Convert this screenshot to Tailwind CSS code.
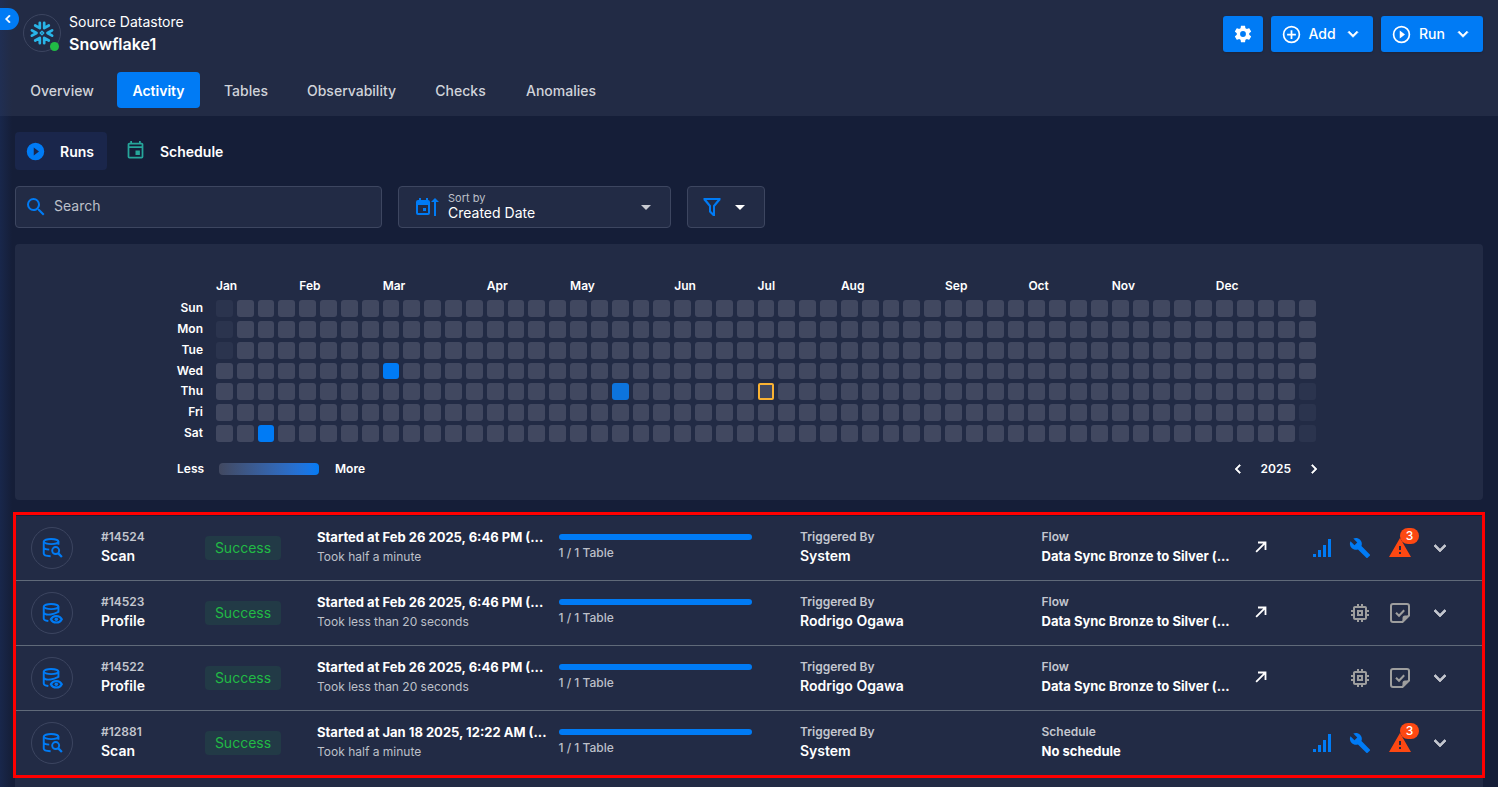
<!DOCTYPE html>
<html lang="en">
<head>
<meta charset="utf-8">
<title>Snowflake1 - Activity</title>
<meta name="viewport" content="width=device-width, initial-scale=1">
<script src="https://cdn.jsdelivr.net/npm/@tailwindcss/browser@4"></script>
</head>
<body class="relative flex min-h-screen flex-col bg-[#151e38] font-['Inter','Liberation_Sans',sans-serif] text-sm text-white">

<svg class="hidden" aria-hidden="true">
  <symbol id="chev-down" viewBox="0 0 24 24"><path stroke="currentColor" stroke-width="0.8" d="M7.41,8.58L12,13.17L16.59,8.58L18,10L12,16L6,10L7.41,8.58Z"/></symbol>
  <symbol id="chev-left" viewBox="0 0 24 24"><path stroke="currentColor" stroke-width="0.8" d="M15.41,16.58L10.83,12L15.41,7.41L14,6L8,12L14,18L15.41,16.58Z"/></symbol>
  <symbol id="chev-right" viewBox="0 0 24 24"><path stroke="currentColor" stroke-width="0.8" d="M8.59,16.58L13.17,12L8.59,7.41L10,6L16,12L10,18L8.59,16.58Z"/></symbol>
  <symbol id="menu-down" viewBox="0 0 24 24"><path d="M7,10L12,15L17,10H7Z"/></symbol>
  <symbol id="wrench" viewBox="0 0 24 24"><path d="M22.7,19L13.6,9.9C14.5,7.6 14,4.9 12.1,3C10.1,1 7.1,0.6 4.7,1.7L9,6L6,9L1.6,4.7C0.4,7.1 0.9,10.1 2.9,12.1C4.8,14 7.5,14.5 9.8,13.6L18.9,22.7C19.3,23.1 19.9,23.1 20.3,22.7L22.6,20.4C23.1,20 23.1,19.3 22.7,19Z"/></symbol>
  <symbol id="alert" viewBox="0 0 24 24"><path d="M13,14H11V10H13M13,18H11V16H13M1,21H23L12,2L1,21Z"/></symbol>
  <symbol id="bars" viewBox="0 0 24 24"><path d="M3,18H6V21H3ZM8,14H11V21H8ZM13,9H16V21H13ZM18,3H21V21H18Z"/></symbol>
  <symbol id="chip" viewBox="0 0 24 24"><path d="M15 9H9v6h6V9zm-2 4h-2v-2h2v2zm8-2V9h-2V7c0-1.1-.9-2-2-2h-2V3h-2v2h-2V3H9v2H7c-1.1 0-2 .9-2 2v2H3v2h2v2H3v2h2v2c0 1.1.9 2 2 2h2v2h2v-2h2v2h2v-2h2c1.1 0 2-.9 2-2v-2h2v-2h-2v-2h2zm-4 6H7V7h10v10z"/></symbol>
  <symbol id="note-check" viewBox="0 0 24 24"><path d="M14.5,21H5A2,2 0 0,1 3,19V5A2,2 0 0,1 5,3H19A2,2 0 0,1 21,5V14.5Z" fill="none" stroke="currentColor" stroke-width="2"/><path d="M14.5,21V17A2.5,2.5 0 0,1 17,14.5H21Z"/><path d="M8,11.8L11,14.8L16.2,9.2" fill="none" stroke="currentColor" stroke-width="2"/></symbol>
  <symbol id="arrow" viewBox="0 0 24 24"><path d="M5.5,18.5L17.5,6.5M8,6H18V16" fill="none" stroke="currentColor" stroke-width="2.4"/></symbol>
  <symbol id="db-scan" viewBox="0 0 24 24" fill="none" stroke="currentColor" stroke-width="2.1">
    <ellipse cx="11" cy="5" rx="8" ry="2.8"/><path d="M3,5V18C3,19.5 5.5,20.800 10.5,21M19,5V8.500M3,11.500C3.300,12.800 5.500,13.600 9,13.800"/><circle cx="16" cy="14.800" r="3.800"/><path stroke-width="2.500" d="M18.600,17.600L22.800,21.800"/>
  </symbol>
  <symbol id="db-profile" viewBox="0 0 24 24" fill="none" stroke="currentColor" stroke-width="2.1">
    <ellipse cx="11" cy="5" rx="8" ry="2.8"/><path d="M3,5V18C3,19.300 4.500,20.300 8,20.800M19,5V11.500M3,11.500C3.300,13 6.500,14 10.500,13.600C13,13.300 16,12.300 19,10.800"/><path d="M10.700,18.800C12,16.200 14,15.200 16.700,15.200C19.400,15.200 21.400,16.200 22.700,18.800C21.400,21.400 19.400,22.400 16.700,22.400C14,22.400 12,21.400 10.700,18.800Z" stroke-width="2.300"/><circle cx="16.700" cy="18.800" r="1.900" fill="currentColor" stroke="none"/>
  </symbol>
</svg>

<header class="flex flex-col bg-[#222b45] px-[15px] pb-2">
  <div class="flex items-start justify-between pt-[11px]">
    <div class="flex items-center pl-2">
      <div class="relative flex size-[38px] items-center justify-center rounded-full border border-[#3c4560]">
        <svg class="size-6 text-[#29b5e8]" viewBox="0 0 24 24" fill="none" stroke="currentColor" stroke-width="2.700" stroke-linecap="round" stroke-linejoin="round">
          <path d="M9.800,1.800V7.200L5.200,4.500M14.200,1.800V7.200L18.800,4.500M9.800,22.200V16.800L5.200,19.500M14.200,22.200V16.800L18.800,19.500M1.900,9.300L6.500,12L1.900,14.700M22.100,9.300L17.500,12L22.100,14.700"/>
          <path stroke-width="1.300" d="M12,10.200L13.800,12L12,13.800L10.200,12Z"/>
        </svg>
        <span class="absolute right-[1px] bottom-0 size-[9px] rounded-full bg-[#21ba45]"></span>
      </div>
      <div class="pl-2">
        <p class="leading-[22px]">Source Datastore</p>
        <h1 class="text-base leading-[22px] font-semibold">Snowflake1</h1>
      </div>
    </div>
    <div class="flex gap-2 pt-[5px] font-medium">
      <button type="button" aria-label="Settings" class="flex h-9 w-10 items-center justify-center rounded-[3px] bg-[#007bf5] shadow-sm">
        <svg class="size-[20px]" viewBox="0 0 24 24" fill="currentColor"><path d="M12,15.5A3.5,3.5 0 0,1 8.5,12A3.5,3.5 0 0,1 12,8.5A3.5,3.5 0 0,1 15.5,12A3.5,3.5 0 0,1 12,15.5M19.43,12.97C19.47,12.65 19.5,12.33 19.5,12C19.5,11.67 19.47,11.34 19.43,11L21.54,9.37C21.73,9.22 21.78,8.95 21.66,8.73L19.66,5.27C19.54,5.05 19.27,4.96 19.05,5.05L16.56,6.05C16.04,5.66 15.5,5.32 14.87,5.07L14.5,2.42C14.46,2.18 14.25,2 14,2H10C9.75,2 9.54,2.18 9.5,2.42L9.13,5.07C8.5,5.32 7.96,5.66 7.44,6.05L4.95,5.05C4.73,4.96 4.46,5.05 4.34,5.27L2.34,8.73C2.21,8.95 2.27,9.22 2.46,9.37L4.57,11C4.53,11.34 4.5,11.67 4.5,12C4.5,12.33 4.53,12.65 4.57,12.97L2.46,14.63C2.27,14.78 2.21,15.05 2.34,15.27L4.34,18.73C4.46,18.95 4.73,19.03 4.95,18.95L7.44,17.94C7.96,18.34 8.5,18.68 9.13,18.93L9.5,21.58C9.54,21.82 9.75,22 10,22H14C14.25,22 14.46,21.82 14.5,21.58L14.87,18.93C15.5,18.67 16.04,18.34 16.56,17.94L19.05,18.95C19.27,19.03 19.54,18.95 19.66,18.73L21.66,15.27C21.78,15.05 21.73,14.78 21.54,14.63L19.43,12.97Z"/></svg>
      </button>
      <button type="button" class="flex h-9 w-[102px] items-center rounded-[3px] bg-[#007bf5] pl-[10px] shadow-sm">
        <svg class="size-[21px]" viewBox="0 0 24 24" fill="currentColor"><path d="M12,20C7.59,20 4,16.41 4,12C4,7.59 7.59,4 12,4C16.41,4 20,7.59 20,12C20,16.41 16.41,20 12,20M12,2A10,10 0 0,0 2,12A10,10 0 0,0 12,22A10,10 0 0,0 22,12A10,10 0 0,0 12,2M13,7H11V11H7V13H11V17H13V13H17V11H13V7Z"/></svg>
        <span class="flex-1 pr-px text-center">Add</span>
        <svg class="mr-[10px] size-5" fill="currentColor"><use href="#chev-down"/></svg>
      </button>
      <button type="button" class="flex h-9 w-[102px] items-center rounded-[3px] bg-[#007bf5] pl-[10px] shadow-sm">
        <svg class="size-[21px]" viewBox="0 0 24 24" fill="currentColor"><path d="M12,20C7.59,20 4,16.41 4,12C4,7.59 7.59,4 12,4C16.41,4 20,7.59 20,12C20,16.41 16.41,20 12,20M12,2A10,10 0 0,0 2,12A10,10 0 0,0 12,22A10,10 0 0,0 22,12A10,10 0 0,0 12,2M10,16.5L16,12L10,7.5V16.5Z"/></svg>
        <span class="flex-1 pr-px text-center">Run</span>
        <svg class="mr-[10px] size-5" fill="currentColor"><use href="#chev-down"/></svg>
      </button>
    </div>
  </div>
  <nav class="mt-[17px] flex h-9 gap-2 font-medium text-[#d0d3da]">
    <a href="#" class="flex w-[94px] items-center justify-center rounded pt-[2px]">Overview</a>
    <a href="#" class="flex w-[83px] items-center justify-center rounded bg-[#007bf5] pt-[2px] font-semibold text-white" aria-current="page">Activity</a>
    <a href="#" class="flex w-[76px] items-center justify-center rounded pt-[2px]">Tables</a>
    <a href="#" class="flex w-[119px] items-center justify-center rounded pt-[2px]">Observability</a>
    <a href="#" class="flex w-[83px] items-center justify-center rounded pt-[2px]">Checks</a>
    <a href="#" class="flex w-[102px] items-center justify-center rounded pt-[2px]">Anomalies</a>
  </nav>
</header>

<button type="button" aria-label="Collapse" class="absolute top-2 left-0 z-10 flex h-[22px] w-[19px] items-center justify-center rounded-r-full bg-[#007bf5] pr-[3px]">
  <svg class="size-[18px]" fill="currentColor"><use href="#chev-left"/></svg>
</button>
<div class="pointer-events-none absolute inset-y-0 left-0 w-3 bg-gradient-to-r from-[#1d3467]/40 to-transparent"></div>

<main class="flex flex-1 flex-col px-[15px] pt-4">
  <nav class="flex h-[38px] gap-1 font-semibold">
    <a href="#" class="flex w-[92px] items-center rounded bg-[#1a264b] pl-[10px]" aria-current="page">
      <svg class="size-[21px] text-[#007bf5]" viewBox="0 0 24 24" fill="currentColor"><path d="M10,16.5V7.5L16,12M12,2A10,10 0 0,0 2,12A10,10 0 0,0 12,22A10,10 0 0,0 22,12A10,10 0 0,0 12,2Z"/></svg>
      <span class="pt-px pl-[14px]">Runs</span>
    </a>
    <a href="#" class="flex items-center pl-[14px]">
      <svg class="mb-[2px] size-[21px] text-[#26a69a]" viewBox="0 0 24 24" fill="currentColor" fill-rule="evenodd"><path d="M16,1V3H8V1H6V3H5C3.89,3 3,3.890 3,5V19A2,2 0 0,0 5,21H19A2,2 0 0,0 21,19V5C21,3.890 20.100,3 19,3H18V1ZM5,9H19V19H5ZM5,5H19V7H5ZM12,12H17V17H12Z"/></svg>
      <span class="pt-px pl-[14px]">Schedule</span>
    </a>
  </nav>

  <div class="mt-4 flex h-[42px] gap-4">
    <label class="flex w-1/4 items-center rounded border border-[#3d4660] bg-[#222b45] pl-2">
      <svg class="size-6 text-[#007bf5]" viewBox="0 0 24 24" fill="currentColor"><path d="M9.5,3A6.5,6.5 0 0,1 16,9.5C16,11.11 15.41,12.59 14.44,13.73L14.71,14H15.5L20.5,19L19,20.5L14,15.5V14.71L13.73,14.44C12.59,15.41 11.11,16 9.5,16A6.5,6.5 0 0,1 3,9.5A6.5,6.5 0 0,1 9.5,3M9.5,5C7,5 5,7 5,9.5C5,12 7,14 9.5,14C12,14 14,12 14,9.5C14,7 12,5 9.5,5Z"/></svg>
      <input type="search" aria-label="Search" placeholder="Search" class="ml-[6px] min-w-0 flex-1 bg-transparent pb-[2px] outline-none placeholder:text-[#bdc0c9]">
    </label>
    <div class="relative flex w-[273px] items-center rounded border border-[#3d4660] bg-[#222b45] pl-4">
      <svg class="h-6 w-[25px] text-[#007bf5]" viewBox="0 0 25 24" fill="currentColor" fill-rule="evenodd"><path d="M4,3H6V5H11V3H13V5A2,2 0 0,1 15,7V18A2,2 0 0,1 13,20H3A2,2 0 0,1 1,18V7A2,2 0 0,1 3,5H4ZM3,10V18H13V10ZM8,13H11V16H8ZM20,3L24,7H21V21H19V7H16Z"/></svg>
      <div class="flex flex-1 flex-col pb-[2px] pl-2">
        <label for="sort" class="text-[11px] leading-[13px] text-[#bdc0c9]">Sort by</label>
        <select id="sort" class="h-4 w-full appearance-none bg-transparent leading-4 outline-none"><option>Created Date</option></select>
      </div>
      <svg class="pointer-events-none absolute right-3 size-6 text-[#c8cad1]" fill="currentColor"><use href="#menu-down"/></svg>
    </div>
    <button type="button" aria-label="Filter" class="flex w-[78px] items-center rounded border border-[#3d4660] bg-[#222b45] pl-3">
      <svg class="size-6 text-[#007bf5]" viewBox="0 0 24 24" fill="currentColor"><path d="M3.500,3H20.500V5L15,11.500V21H13L9,17V11.500L3.500,5ZM6.500,5L11,10.600V16L13,18V10.600L17.500,5Z" fill-rule="evenodd"/></svg>
      <svg class="ml-1 size-6" fill="currentColor"><use href="#menu-down"/></svg>
    </button>
  </div>

  <section aria-label="Run history" class="mt-4 rounded bg-[#222b45] px-4 pt-8 pb-5">
    <div class="mx-auto max-w-[1144px] pr-[5px] text-xs font-semibold">
      <div id="calendar" class="grid grid-cols-[35px_repeat(53,minmax(0,1fr))] gap-1"></div>
      <div class="mt-4 flex h-[22px] items-center">
        <span class="w-[42px]">Less</span>
        <span class="h-3 w-[100px] rounded bg-gradient-to-r from-[#414860] to-[#007bf5]"></span>
        <span class="ml-4">More</span>
        <div class="-mr-[7px] ml-auto flex items-center gap-[14px]">
          <button type="button" aria-label="Previous year"><svg class="size-[18px]" fill="currentColor"><use href="#chev-left"/></svg></button>
          <span>2025</span>
          <button type="button" aria-label="Next year"><svg class="size-[18px]" fill="currentColor"><use href="#chev-right"/></svg></button>
        </div>
      </div>
    </div>
  </section>

  <section aria-label="Runs" class="mt-4 flex-1 bg-[#222b45]">
    <div class="relative">
      <ul id="runs"></ul>
      <div class="pointer-events-none absolute -inset-x-[2px] -top-1 -bottom-[2px] border-[3px] border-[#ff0000]"></div>
    </div>
  </section>
</main>

<template id="run-row">
  <li class="grid h-[65px] grid-cols-[70px_104px_112px_repeat(4,minmax(0,1fr))_200px] items-center border-b border-[#606a79] pl-4">
    <div class="flex size-[42px] items-center justify-center rounded-full border border-[#3c4560]">
      <svg class="size-[22px] text-[#007bf5]" fill="currentColor"><use data-f="icon"/></svg>
    </div>
    <div class="pb-[2px]">
      <p class="text-xs leading-[18px] font-semibold text-[#c4c7cf]" data-f="id"></p>
      <p class="leading-5 font-semibold" data-f="kind"></p>
    </div>
    <div><span class="flex h-6 w-[76px] items-center justify-center rounded bg-[#223a46] text-[#21ba45]">Success</span></div>
    <div class="whitespace-nowrap">
      <p class="text-[13px] leading-[18px] font-bold" data-f="started"></p>
      <p class="text-xs leading-[22px] text-[#bdc0c9]" data-f="took"></p>
    </div>
    <div class="pr-12">
      <div class="h-[6px] rounded-full bg-[#007bf5]" role="progressbar" aria-valuenow="100" aria-label="Progress"></div>
      <p class="mt-1 text-xs leading-[18px] font-medium text-[#bdc0c9]">1 / 1 Table</p>
    </div>
    <div class="pb-[2px]">
      <p class="text-xs leading-[18px] font-semibold text-[#c4c7cf]">Triggered By</p>
      <p class="leading-5 font-semibold" data-f="by"></p>
    </div>
    <div class="flex items-center pb-[2px] whitespace-nowrap">
      <div class="w-[210px]">
        <p class="text-xs leading-[18px] font-semibold text-[#c4c7cf]" data-f="srcLabel"></p>
        <p class="text-[13px] leading-5 font-bold" data-f="src"></p>
      </div>
      <a href="#" aria-label="Open flow" data-f="open"><svg class="size-[18px]"><use href="#arrow"/></svg></a>
    </div>
    <div class="flex items-center justify-end pr-[23px]">
      <div class="contents" data-f="alerts">
        <button type="button" aria-label="Metrics" class="flex w-10 justify-center"><svg class="ml-1 size-6 text-[#007bf5]" fill="currentColor"><use href="#bars"/></svg></button>
        <button type="button" aria-label="Repair" class="flex w-10 justify-center"><svg class="size-[22px] text-[#007bf5]" fill="currentColor"><use href="#wrench"/></svg></button>
        <button type="button" aria-label="Anomalies" class="relative flex w-10 justify-center"><svg class="size-6 text-[#fd4812]" fill="currentColor"><use href="#alert"/></svg><span class="absolute -top-2 left-[20px] flex h-4 w-[19px] items-center justify-center rounded-full bg-[#fd4812] text-xs font-medium">3</span></button>
      </div>
      <div class="contents" data-f="plain">
        <button type="button" aria-label="Processing" class="flex w-10 justify-center"><svg class="size-6 text-[#9e9e9e]" fill="currentColor"><use href="#chip"/></svg></button>
        <button type="button" aria-label="Notes" class="flex w-10 justify-center"><svg class="size-6 text-[#9e9e9e]" fill="currentColor"><use href="#note-check"/></svg></button>
      </div>
      <button type="button" aria-label="Expand" class="flex w-10 justify-center"><svg class="size-6 text-[#c4c7cf]" fill="currentColor"><use href="#chev-down"/></svg></button>
    </div>
  </li>
</template>

<script>
  const months = [['Jan',0],['Feb',4],['Mar',8],['Apr',13],['May',17],['Jun',22],['Jul',26],['Aug',30],['Sep',35],['Oct',39],['Nov',43],['Dec',48]];
  const days = ['Sun','Mon','Tue','Wed','Thu','Fri','Sat'];
  const special = {'3-8':'bg-[#007bf5]', '4-19':'bg-[#0d74dd]', '6-2':'bg-[#007bf5]', '4-26':'bg-[#414860] border-2 border-[#f9b233]'};
  let html = '';
  for (const [name, col] of months)
    html += `<span class="h-5 leading-5 whitespace-nowrap" style="grid-row:1;grid-column:${col + 2} / span 3">${name}</span>`;
  days.forEach((day, r) => {
    html += `<span class="flex h-4 items-center justify-end pr-[9px]" style="grid-row:${r + 2};grid-column:1">${day}</span>`;
    for (let c = 0; c < 53; c++) {
      const outside = (c === 0 && r < 3) || (c === 52 && r > 3);
      const tone = special[r + '-' + c] || (outside ? 'bg-[#2b344e]' : 'bg-[#414860]');
      html += `<span class="${c === 26 && r === 4 ? 'rounded-[2px]' : 'rounded-[3px]'} aspect-square ${tone}" style="grid-row:${r + 2};grid-column:${c + 2}"></span>`;
    }
  });
  document.getElementById('calendar').innerHTML = html;

  const flow = 'Data Sync Bronze to Silver (...';
  const runs = [
    {id:'#14524', kind:'Scan', started:'Started at Feb 26 2025, 6:46 PM (...', took:'Took half a minute', by:'System', srcLabel:'Flow', src:flow},
    {id:'#14523', kind:'Profile', started:'Started at Feb 26 2025, 6:46 PM (...', took:'Took less than 20 seconds', by:'Rodrigo Ogawa', srcLabel:'Flow', src:flow},
    {id:'#14522', kind:'Profile', started:'Started at Feb 26 2025, 6:46 PM (...', took:'Took less than 20 seconds', by:'Rodrigo Ogawa', srcLabel:'Flow', src:flow},
    {id:'#12881', kind:'Scan', started:'Started at Jan 18 2025, 12:22 AM (...', took:'Took half a minute', by:'System', srcLabel:'Schedule', src:'No schedule'}
  ];
  const tpl = document.getElementById('run-row'), list = document.getElementById('runs');
  for (const run of runs) {
    const row = tpl.content.cloneNode(true);
    const at = f => row.querySelector(`[data-f="${f}"]`);
    for (const f in run) at(f).textContent = run[f];
    at('icon').setAttribute('href', run.kind === 'Scan' ? '#db-scan' : '#db-profile');
    if (run.srcLabel !== 'Flow') at('open').remove();
    at(run.kind === 'Scan' ? 'plain' : 'alerts').remove();
    list.append(row);
  }
</script>
</body>
</html>
